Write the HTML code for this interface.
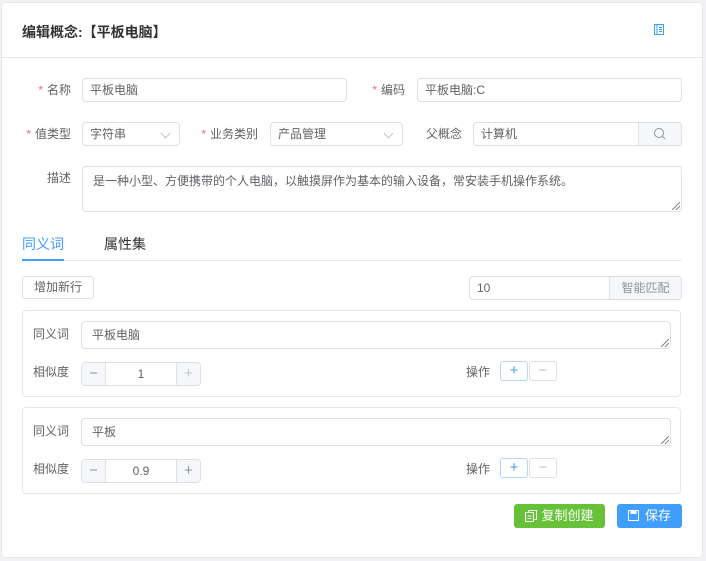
<!DOCTYPE html>
<html><head><meta charset="utf-8"><style>
*{box-sizing:border-box;margin:0;padding:0}
body{width:706px;height:561px;background:#f2f2f4;font-family:"Liberation Sans","Noto Sans CJK SC",sans-serif;font-size:12px;color:#606266;position:relative;overflow:hidden}
.card{position:absolute;left:1px;top:2px;width:702px;height:556px;background:#fff;border:1px solid #e4e7ed;border-radius:4px}
.a{position:absolute}
.inp{position:absolute;border:1px solid #dcdfe6;border-radius:4px;background:#fff;height:24px;line-height:22px;padding-left:7px;color:#606266;font-size:12px}
.lbl{position:absolute;text-align:right;line-height:24px;color:#606266}
.req{color:#f56c6c;margin-right:4px}
.chev{position:absolute;right:10px;top:7px;width:7px;height:7px;border-right:1px solid #c0c4cc;border-bottom:1px solid #c0c4cc;transform:rotate(45deg)}
.grip{position:absolute;right:1px;bottom:1px;width:8px;height:8px;background:linear-gradient(135deg,transparent 45%,#888 46%,#888 54%,transparent 55%,transparent 70%,#888 71%,#888 79%,transparent 80%)}
.sub{position:absolute;left:22px;width:659px;height:87px;border:1px solid #e4e7ed;border-radius:4px}
.btn{position:absolute;height:23px;border-radius:3px;line-height:21px;text-align:center;font-size:12px}
.pm{font-size:15px}
</style></head><body>
<div class="card"></div>
<div class="a" style="left:22px;top:22px;font-size:14px;font-weight:bold;color:#303133">编辑概念:【平板电脑】</div>
<svg class="a" style="left:653px;top:23px" width="12" height="13" viewBox="0 0 12 13"><rect x="1.5" y="1.5" width="9" height="10" fill="none" stroke="#409eff"/><line x1="4" y1="2" x2="4" y2="11" stroke="#409eff"/><line x1="6" y1="4.5" x2="9" y2="4.5" stroke="#409eff"/><line x1="6" y1="6.5" x2="9" y2="6.5" stroke="#409eff"/><line x1="6" y1="8.5" x2="9" y2="8.5" stroke="#409eff"/></svg>
<div class="a" style="left:2px;top:57px;width:700px;height:1px;background:#e4e7ed"></div>

<div class="lbl" style="left:20px;top:78px;width:51px"><span class="req">*</span>名称</div>
<div class="inp" style="left:82px;top:78px;width:265px">平板电脑</div>
<div class="lbl" style="left:350px;top:78px;width:55px"><span class="req">*</span>编码</div>
<div class="inp" style="left:417px;top:78px;width:265px">平板电脑:C</div>

<div class="lbl" style="left:20px;top:122px;width:51px"><span class="req">*</span>值类型</div>
<div class="inp" style="left:82px;top:122px;width:98px">字符串<i class="chev"></i></div>
<div class="lbl" style="left:190px;top:122px;width:68px"><span class="req">*</span>业务类别</div>
<div class="inp" style="left:270px;top:122px;width:133px">产品管理<i class="chev"></i></div>
<div class="lbl" style="left:420px;top:122px;width:42px">父概念</div>
<div class="inp" style="left:473px;top:122px;width:209px;overflow:hidden">计算机<div class="a" style="right:0;top:0;width:43px;height:22px;background:#f5f7fa;border-left:1px solid #dcdfe6"><svg class="a" style="left:14px;top:4px" width="14" height="14"><circle cx="6" cy="6" r="4.5" fill="none" stroke="#909399"/><line x1="9.3" y1="9.3" x2="12" y2="12" stroke="#909399"/></svg></div></div>

<div class="lbl" style="left:20px;top:166px;width:51px">描述</div>
<div class="inp" style="left:82px;top:166px;width:600px;height:46px;line-height:28px;padding-left:10px">是一种小型、方便携带的个人电脑，以触摸屏作为基本的输入设备，常安装手机操作系统。<i class="grip"></i></div>

<div class="a" style="left:22px;top:234px;font-size:14px;color:#409eff">同义词</div>
<div class="a" style="left:104px;top:234px;font-size:14px;color:#303133">属性集</div>
<div class="a" style="left:22px;top:260px;width:660px;height:1px;background:#e4e7ed"></div>
<div class="a" style="left:22px;top:259px;width:42px;height:2px;background:#409eff"></div>

<div class="btn" style="left:22px;top:276px;width:72px;border:1px solid #dcdfe6;color:#606266">增加新行</div>
<div class="inp" style="left:469px;top:276px;width:213px;overflow:hidden">10<div class="a" style="right:0;top:0;width:72px;height:22px;background:#f5f7fa;border-left:1px solid #dcdfe6;text-align:center;color:#909399">智能匹配</div></div>

<div class="sub" style="top:310px"></div>
<div class="a" style="left:33px;top:325px">同义词</div>
<div class="inp" style="left:81px;top:321px;width:590px;height:28px;line-height:26px;padding-left:10px">平板电脑<i class="grip"></i></div>
<div class="a" style="left:33px;top:363px">相似度</div>
<div class="inp" style="left:81px;top:362px;width:120px;padding:0;overflow:hidden;text-align:center"><div class="a pm" style="left:0;top:0;width:24px;height:22px;background:#f5f7fa;border-right:1px solid #dcdfe6;color:#909399">−</div>1<div class="a pm" style="right:0;top:0;width:24px;height:22px;background:#f5f7fa;border-left:1px solid #dcdfe6;color:#c0c4cc">+</div></div>
<div class="a" style="left:466px;top:363px">操作</div>
<div class="btn pm" style="left:500px;top:361px;width:28px;height:20px;line-height:18px;border:1px solid #b3d8ff;color:#409eff">+</div>
<div class="btn pm" style="left:529px;top:361px;width:28px;height:20px;line-height:18px;border:1px solid #dcdfe6;color:#c0c4cc">−</div>

<div class="sub" style="top:407px"></div>
<div class="a" style="left:33px;top:422px">同义词</div>
<div class="inp" style="left:81px;top:418px;width:590px;height:28px;line-height:26px;padding-left:10px">平板<i class="grip"></i></div>
<div class="a" style="left:33px;top:460px">相似度</div>
<div class="inp" style="left:81px;top:459px;width:120px;padding:0;overflow:hidden;text-align:center"><div class="a pm" style="left:0;top:0;width:24px;height:22px;background:#f5f7fa;border-right:1px solid #dcdfe6;color:#909399">−</div>0.9<div class="a pm" style="right:0;top:0;width:24px;height:22px;background:#f5f7fa;border-left:1px solid #dcdfe6;color:#909399">+</div></div>
<div class="a" style="left:466px;top:460px">操作</div>
<div class="btn pm" style="left:500px;top:458px;width:28px;height:20px;line-height:18px;border:1px solid #b3d8ff;color:#409eff">+</div>
<div class="btn pm" style="left:529px;top:458px;width:28px;height:20px;line-height:18px;border:1px solid #dcdfe6;color:#c0c4cc">−</div>

<div class="btn" style="left:514px;top:504px;width:91px;height:24px;line-height:24px;background:#67c23a;color:#fff;font-size:13px"><svg style="vertical-align:-2px;margin-right:4px" width="12" height="12"><rect x="3.5" y="0.5" width="8" height="9" fill="none" stroke="#fff"/><rect x="0.5" y="2.5" width="8" height="9" fill="#67c23a" stroke="#fff"/><line x1="2.5" y1="6" x2="6.5" y2="6" stroke="#fff"/><line x1="2.5" y1="8.5" x2="6.5" y2="8.5" stroke="#fff"/></svg>复制创建</div>
<div class="btn" style="left:617px;top:504px;width:65px;height:24px;line-height:24px;background:#409eff;color:#fff;font-size:13px"><svg style="vertical-align:-1px;margin-right:6px" width="11" height="11"><rect x="0.5" y="0.5" width="10" height="10" fill="none" stroke="#fff"/><rect x="2.5" y="0.5" width="6" height="3.5" fill="#fff"/></svg>保存</div>
</body></html>
